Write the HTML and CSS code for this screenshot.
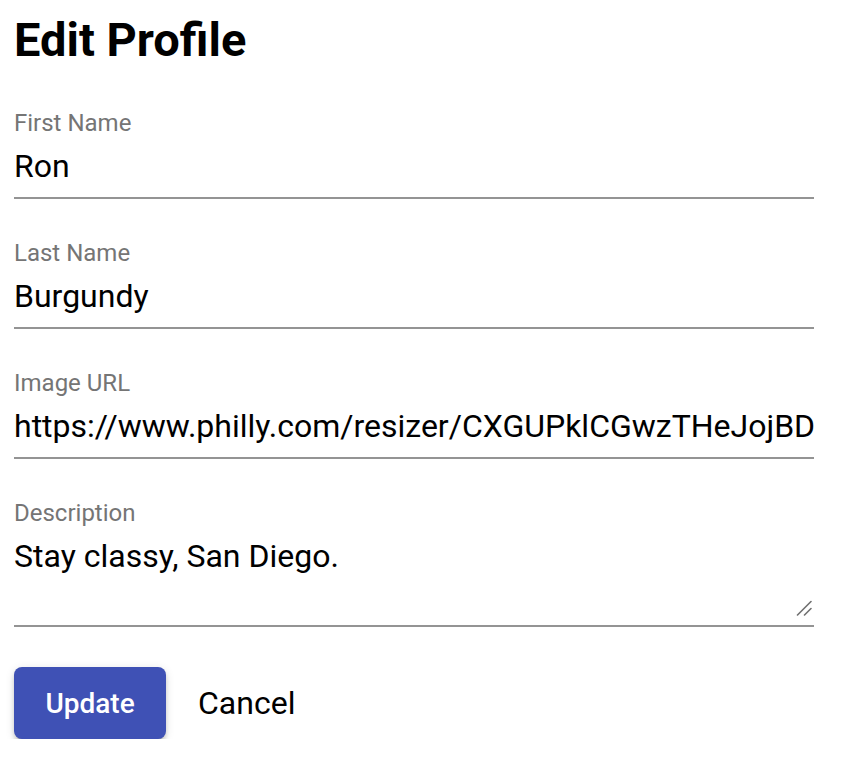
FILE: index.html
```html
<!DOCTYPE html>
<html lang="en">
<head>
<meta charset="utf-8">
<title>Edit Profile</title>
<link rel="stylesheet" href="styles.css">
</head>
<body>
<main class="page">
  <h1 class="title">Edit Profile</h1>
  <form class="form">
    <div class="field">
      <label class="label" for="first">First Name</label>
      <input class="input" id="first" type="text" value="Ron">
    </div>
    <div class="field">
      <label class="label" for="last">Last Name</label>
      <input class="input" id="last" type="text" value="Burgundy">
    </div>
    <div class="field">
      <label class="label" for="url">Image URL</label>
      <input class="input" id="url" type="text" value="https://www.philly.com/resizer/CXGUPklCGwzTHeJojBDxyz123/1200x0/smart/ron-burgundy.jpg">
    </div>
    <div class="field">
      <label class="label" for="desc">Description</label>
      <div class="textarea-wrap">
        <textarea class="textarea" id="desc" rows="2">Stay classy, San Diego.</textarea>
        <svg class="resize-grip" width="16" height="16" viewBox="0 0 16 16" aria-hidden="true">
          <line x1="1.5" y1="15" x2="15" y2="1.5" stroke="#6f6f6f" stroke-width="1.6" stroke-linecap="round"/>
          <line x1="8.5" y1="15" x2="15" y2="8.5" stroke="#6f6f6f" stroke-width="1.6" stroke-linecap="round"/>
        </svg>
      </div>
    </div>
    <div class="actions">
      <button class="btn btn-primary" type="button">Update</button>
      <button class="btn btn-text" type="button">Cancel</button>
    </div>
  </form>
</main>
</body>
</html>
```

FILE: styles.css
```css
* { box-sizing: border-box; }

html, body {
  margin: 0;
  padding: 0;
  background: #ffffff;
}

body {
  font-family: Roboto, "Liberation Sans", Arial, sans-serif;
  color: #000000;
}

.page {
  padding: 12px 0 0 14px;
  width: 814px;
}

.title {
  margin: 0;
  font-size: 47px;
  line-height: 56px;
  font-weight: 700;
  height: 56px;
}

.form {
  display: flex;
  flex-direction: column;
  gap: 40px;
  margin-top: 41px;
}

.field {
  display: flex;
  flex-direction: column;
  width: 800px;
}

.label {
  font-size: 24px;
  line-height: 28px;
  height: 28px;
  color: #757575;
  margin-bottom: 10px;
}

.input {
  display: block;
  width: 800px;
  font-family: inherit;
  font-size: 32px;
  line-height: 38px;
  height: 52px;
  padding: 0 0 12px 0;
  margin: 0;
  border: none;
  border-bottom: 2px solid #949494;
  border-radius: 0;
  outline: none;
  background: transparent;
  color: #000000;
}

.textarea-wrap {
  position: relative;
  width: 800px;
  padding-bottom: 9px;
  border-bottom: 2px solid #949494;
}

.textarea {
  display: block;
  width: 800px;
  height: 79px;
  margin: 0;
  padding: 0;
  border: none;
  outline: none;
  background: transparent;
  font-family: inherit;
  font-size: 32px;
  line-height: 38px;
  color: #000000;
  resize: none;
  overflow: hidden;
}

.resize-grip {
  position: absolute;
  right: 2px;
  bottom: 9px;
  display: block;
}

.actions {
  display: flex;
  align-items: center;
  gap: 16px;
}

.btn {
  font-family: inherit;
  border: none;
  cursor: pointer;
  background: transparent;
}

.btn-primary {
  width: 152px;
  height: 72px;
  border-radius: 8px;
  background: #3f51b5;
  color: #ffffff;
  font-size: 28px;
  font-weight: 500;
  box-shadow: 0 6px 2px -4px rgba(0,0,0,0.2), 0 4px 4px 0 rgba(0,0,0,0.14), 0 2px 10px 0 rgba(0,0,0,0.12);
}

.btn-text {
  height: 72px;
  padding: 0 16px;
  font-size: 32px;
  font-weight: 400;
  color: #000000;
}
```
